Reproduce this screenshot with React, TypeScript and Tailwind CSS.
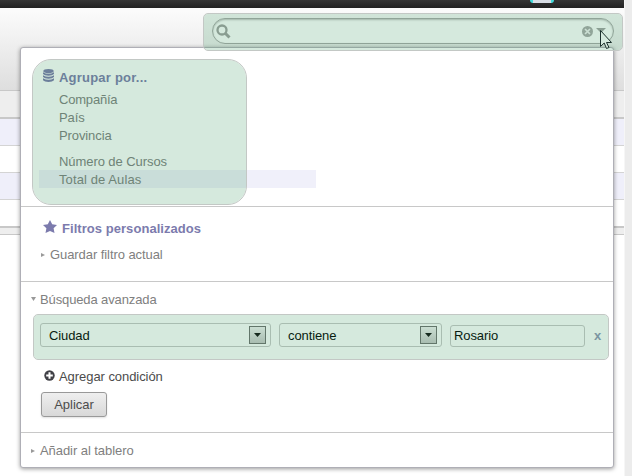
import React from "react";

const font = { fontFamily: '"Liberation Sans", Arial, sans-serif' };

function Highlight({ className }: { className: string }) {
  return <div className={`pointer-events-none absolute border border-[#c3c8c5] bg-[rgba(45,145,85,0.2)] bg-clip-padding ${className}`} />;
}

function PageBackdrop() {
  return (
    <div className="flex h-full w-full">
      <div className="flex w-[624px] flex-col bg-white">
        <div className="h-2 bg-linear-to-b from-[#363636] to-[#222222] pl-[530px]">
          <div className="h-[3px] w-6 rounded-b-[3px] border-x-3 border-[#42dada] bg-[#d8dde5]" />
        </div>
        <div className="h-[83px] border-b border-[#c8c8c8] bg-linear-to-b from-[#fcfcfc] to-[#dedede]" />
        <div className="h-7 border-b-2 border-[#c8c8c8] bg-[#eeeeee]" />
        <div className="h-[27px] border-b border-[#d4d4d4] bg-[#efeffa]" />
        <div className="h-[27px] border-b border-[#d4d4d4]" />
        <div className="h-[27px] border-b border-[#d4d4d4] bg-[#efeffa]" />
        <div className="h-7 border-b-2 border-[#c8c8c8]" />
        <div className="h-[7px] border-b border-[#c8c8c8] bg-[#eeeeee]" />
      </div>
      <div className="flex-1 border-l border-[#f6f6f6] bg-[#ececec]" />
    </div>
  );
}

function SearchBox() {
  return (
    <div className="absolute left-[212px] top-[18px] flex h-[26px] w-[402px] items-center rounded-full border border-[#a9a9a9] bg-white pl-[3px] pr-[7px] shadow-[inset_0_1px_2px_rgba(0,0,0,0.25)]">
      <svg width="15" height="15" viewBox="0 0 15 15" fill="none" stroke="#a0a0a0" strokeWidth="2.3">
        <circle cx="6" cy="6" r="4.5" />
        <path d="M9 9l4.500 4.500" strokeWidth="3" />
      </svg>
      <svg className="ml-auto" width="11" height="11" viewBox="0 0 11 11">
        <circle cx="5.5" cy="5.5" r="5.5" fill="#aaa" />
        <path d="M3 3l5 5M8 3L3 8" stroke="#f3f3f3" strokeWidth="1.7" />
      </svg>
      <svg className="mb-0.5 ml-[3px]" width="10" height="5" viewBox="0 0 10 5">
        <path d="M0 0h10L5 5z" fill="#a3a3a3" />
      </svg>
    </div>
  );
}

function Select({ label, className }: { label: string; className: string }) {
  return (
    <div className={`flex h-6 items-center justify-between rounded-[3px] border border-[#c8c8c8] pl-2 pr-1 text-black ${className}`}>
      <span className="pt-0.5 tracking-[-0.1px]">{label}</span>
      <span className="flex h-[18px] w-[17px] items-center justify-center border border-[#707070] bg-linear-to-b from-[#f2f2f2] to-[#c8c8c8]">
        <svg width="7" height="4" viewBox="0 0 7 4"><path d="M0 0h7L3.5 4z" fill="#111" /></svg>
      </span>
    </div>
  );
}

function RightArrow() {
  return <svg width="4" height="4" viewBox="0 0 4 4"><path d="M0 0l4 2-4 2z" fill="#999" /></svg>;
}

function SearchPanel() {
  return (
    <div className="absolute left-5 top-[47px] flex h-[421px] w-[594px] flex-col rounded-[3px] border border-[#afafb6] bg-white shadow-[0_1px_4px_rgba(0,0,0,0.4)]">
      <section className="h-[159px] border-b border-[#c8c8c8] pt-5">
        <h3 className="flex h-[18px] items-center pl-[22px] pt-0.5 font-bold tracking-[0.22px] text-[#7c7bad]">
          <svg className="mb-1.5 mr-[5px]" width="11" height="13" viewBox="0 0 11 13" fill="#7c7bad">
            <ellipse cx="5.5" cy="2.1" rx="5.2" ry="2.1" />
            <path d="M0 3.300q5.500 3 11 0v1.800q-1.500 1.700-5.500 1.700T0 5.100zM0 6.300q5.500 3 11 0v1.800q-1.500 1.700-5.500 1.700T0 8.100zM0 9.300q5.500 3 11 0v1.900Q9.500 13 5.500 13T0 11.200z" />
          </svg>
          Agrupar por...
        </h3>
        <ul className="ml-[18px] mt-1 w-[277px] leading-5">
          <li className="h-[18px] pl-5 tracking-[-0.2px]">Compañía</li>
          <li className="h-[18px] pl-5 tracking-[-0.1px]">País</li>
          <li className="h-[18px] pl-5 tracking-[-0.1px]">Provincia</li>
          <li className="mt-2 h-[18px] pl-5 tracking-[-0.07px]">Número de Cursos</li>
          <li className="h-[18px] bg-[#f0f0fa] pl-5 tracking-[0.1px]">Total de Aulas</li>
        </ul>
      </section>
      <section className="h-[75px] border-b border-[#c8c8c8] pt-3">
        <h3 className="flex h-[18px] items-center pl-[22px] pt-0.5 font-bold tracking-[0.05px] text-[#7c7bad]">
          <svg className="mb-1.5 mr-[5px]" width="14" height="13" viewBox="0 0 14 13" fill="#7c7bad">
            <path d="M7 0l2.200 4.200 4.800.7-3.400 3.300.9 4.800L7 10.900 2.500 13l.9-4.800L0 4.900l4.800-.7z" />
          </svg>
          Filtros personalizados
        </h3>
        <div className="mt-2 flex h-[18px] items-center gap-[5px] pl-5 pt-0.5 tracking-[-0.07px]"><RightArrow />Guardar filtro actual</div>
      </section>
      <section className="h-[151px] border-b border-[#c8c8c8] pt-2">
        <div className="flex h-[18px] items-center gap-1 pl-[10px] pt-0.5 tracking-[-0.12px]">
          <svg className="mb-0.5" width="5" height="4" viewBox="0 0 5 4"><path d="M0 0h5L2.500 4z" fill="#999" /></svg>
          Búsqueda avanzada
        </div>
        <div className="mt-[15px] flex items-end pl-[19px]">
          <Select label="Ciudad" className="w-[231px]" />
          <Select label="contiene" className="ml-2 w-[163px]" />
          <div className="ml-2 flex h-[22px] w-[135px] items-center rounded-[3px] border border-[#c8c8c8] pl-[3px] tracking-[-0.1px] text-black">Rosario</div>
          <button className="ml-[9px] h-6 pt-0.5 font-bold text-[#8f97b5]">x</button>
        </div>
        <div className="mt-5 flex h-[18px] items-center pl-[23px] pt-0.5 tracking-[-0.06px] text-[#4c4c4c]">
          <svg className="mb-1 mr-1" width="11" height="11" viewBox="0 0 11 11">
            <circle cx="5.500" cy="5.500" r="5.200" fill="#404046" />
            <path d="M5.500 2.200v6.600M2.200 5.500h6.600" stroke="white" strokeWidth="2" />
          </svg>
          Agregar condición
        </div>
        <button className="ml-5 mt-[7px] h-[25px] w-[66px] rounded-[3px] border border-[#999] bg-linear-to-b from-[#efefef] to-[#d8d8d8] text-[#4c4c4c] shadow-[0_1px_2px_rgba(0,0,0,0.12)]">Aplicar</button>
      </section>
      <section className="flex flex-1 items-center gap-[5px] pl-[10px] pt-0.5 tracking-[-0.06px]"><RightArrow />Añadir al tablero</section>
    </div>
  );
}

export default function App() {
  return (
    <main style={font} className="relative isolate h-[476px] w-[632px] overflow-hidden bg-white text-[13px] leading-[18px] text-[#808080]">
      <PageBackdrop />
      <SearchBox />
      <SearchPanel />
      <Highlight className="left-[203px] top-[13px] h-[38px] w-[420px] rounded-[5px]" />
      <Highlight className="left-8 top-[59px] h-[146px] w-[215px] rounded-[19px]" />
      <Highlight className="left-[33px] top-[314px] h-[46px] w-[576px] rounded-[5px]" />
      <svg className="absolute left-[600px] top-[30px]" width="13" height="20" viewBox="0 0 13 20">
        <path d="M.500.500v16l3.700-3.500 2.300 5.500 2.500-1-2.500-5h5z" fill="#d5e9dd" stroke="#1c302c" />
      </svg>
    </main>
  );
}
